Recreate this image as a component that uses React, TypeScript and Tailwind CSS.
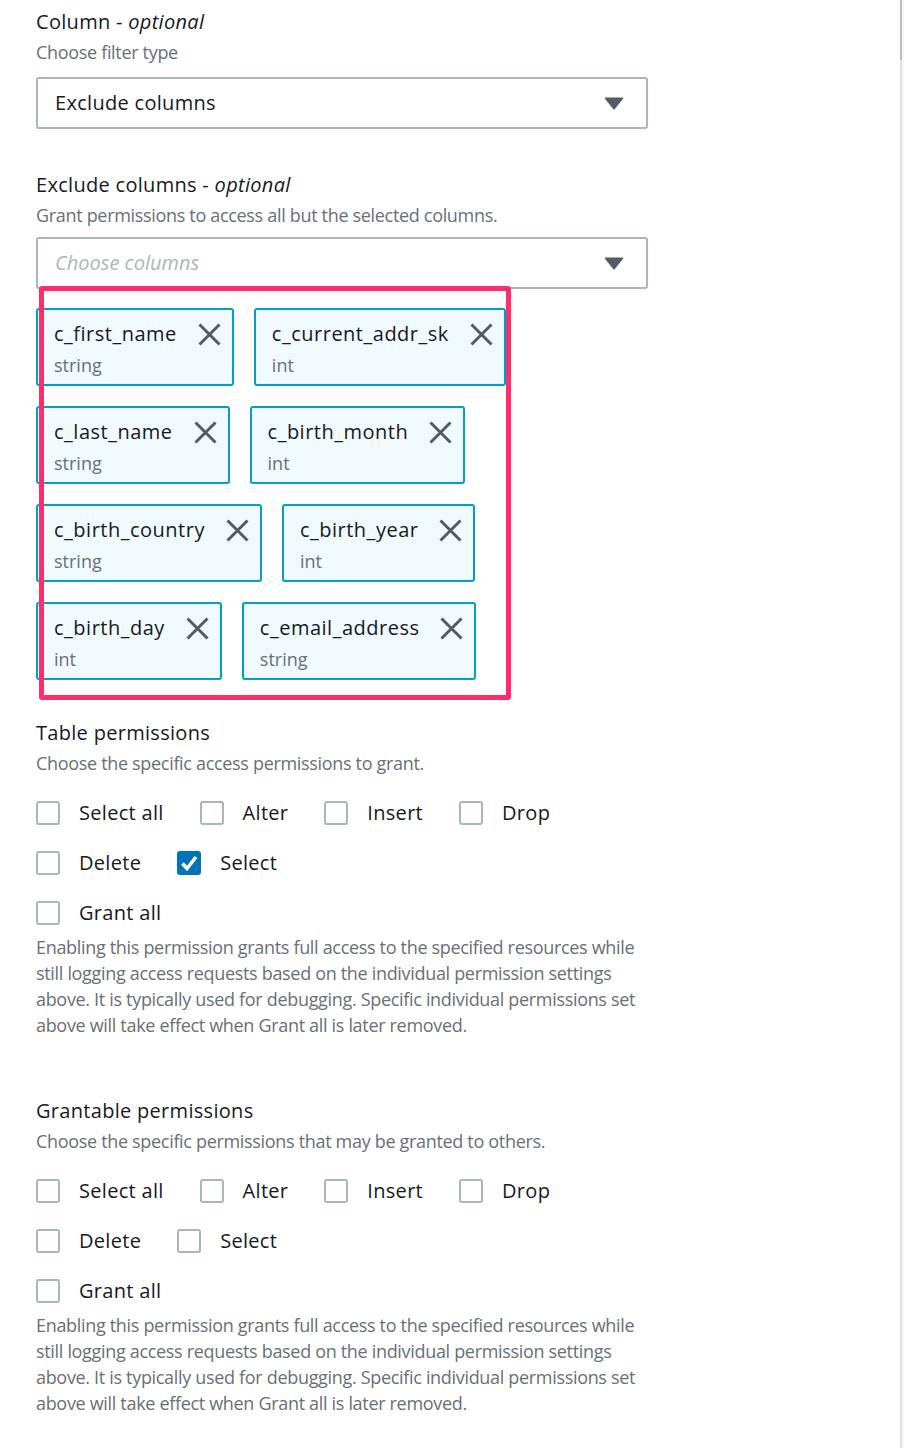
import { Fragment } from "react";

interface Column {
  name: string;
  type: string;
}

const labelText = "text-[20px] leading-[28px] tracking-[0.3px] text-[#16191f]";
const descText = "text-[18px] leading-[26px] tracking-[-0.32px] text-[#687078]";

const columnRows: Column[][] = [
  [
    { name: "c_first_name", type: "string" },
    { name: "c_current_addr_sk", type: "int" },
  ],
  [
    { name: "c_last_name", type: "string" },
    { name: "c_birth_month", type: "int" },
  ],
  [
    { name: "c_birth_country", type: "string" },
    { name: "c_birth_year", type: "int" },
  ],
  [
    { name: "c_birth_day", type: "int" },
    { name: "c_email_address", type: "string" },
  ],
];

const grantAllHelp =
  "Enabling this permission grants full access to the specified resources while still logging access requests based on the individual permission settings above. It is typically used for debugging. Specific individual permissions set above will take effect when Grant all is later removed.";

const CaretDown = () => (
  <svg width="20" height="13" viewBox="0 0 20 13">
    <path
      d="M1.5 1.2 H18.5 L10 11.8 Z"
      fill="#545b64"
      stroke="#545b64"
      strokeWidth="1.5"
      strokeLinejoin="round"
    />
  </svg>
);

const CloseIcon = () => (
  <svg width="23" height="23" viewBox="0 0 23 23" fill="none">
    <path
      d="M1.5 1.5 L21.5 21.5 M21.5 1.5 L1.5 21.5"
      stroke="#545b64"
      strokeWidth="3"
    />
  </svg>
);

const Select = ({ value, placeholder }: { value?: string; placeholder?: string }) => (
  <div className="h-[52px] flex items-center justify-between rounded-[3px] border-2 border-[#aab7b8] bg-white pl-[17px] pr-[22px]">
    {value ? (
      <span className={labelText}>{value}</span>
    ) : (
      <span className="text-[20px] leading-[28px] italic text-[#aab7b8]">
        {placeholder}
      </span>
    )}
    <CaretDown />
  </div>
);

const Token = ({ column }: { column: Column }) => (
  <div className="h-[78px] rounded-[3px] border-2 border-[#00a1c9] bg-[#f1faff] pl-4 pr-[11px] pt-3">
    <div className="flex items-center">
      <span className="text-[20px] leading-[24px] tracking-[0.5px] text-[#16191f]">
        {column.name}
      </span>
      <span className="ml-[21px] flex">
        <CloseIcon />
      </span>
    </div>
    <div className="mt-2 text-[18px] leading-[22px] text-[#687078]">
      {column.type}
    </div>
  </div>
);

const Checkbox = ({ label, checked }: { label: string; checked?: boolean }) => (
  <label className="flex items-center gap-[19px]">
    {checked ? (
      <span className="w-6 h-6 rounded-[3px] bg-[#0073bb] flex items-center justify-center">
        <svg width="24" height="24" viewBox="0 0 24 24" fill="none">
          <path
            d="M5.5 12.5 L10 17.5 L19 6"
            stroke="white"
            strokeWidth="3.5"
            strokeLinejoin="miter"
          />
        </svg>
      </span>
    ) : (
      <span className="w-6 h-6 rounded-[3px] border-2 border-[#aab7b8] bg-white" />
    )}
    <span className={labelText}>{label}</span>
  </label>
);

const PermissionSection = ({
  title,
  description,
  selectChecked,
}: {
  title: string;
  description: string;
  selectChecked?: boolean;
}) => (
  <div>
    <div className={labelText}>{title}</div>
    <div className={`mt-[3px] ${descText}`}>{description}</div>
    <div className="mt-[23px] flex flex-col gap-[22px]">
      <div className="h-[28px] flex items-center gap-x-[36px]">
        <Checkbox label="Select all" />
        <Checkbox label="Alter" />
        <Checkbox label="Insert" />
        <Checkbox label="Drop" />
      </div>
      <div className="h-[28px] flex items-center gap-x-[36px]">
        <Checkbox label="Delete" />
        <Checkbox label="Select" checked={selectChecked} />
      </div>
      <div className="h-[28px] flex items-center">
        <Checkbox label="Grant all" />
      </div>
    </div>
    <p className={`mt-[7px] ${descText}`}>{grantAllHelp}</p>
  </div>
);

export default function App() {
  return (
    <div className="h-[1448px] flex bg-white font-['Open_Sans',sans-serif] overflow-hidden">
      <div className="flex-1 pl-[36px] pt-[8px]">
        <div className="w-[614px]">
          {/* column filter */}
          <div className={labelText}>
            Column - <span className="italic">optional</span>
          </div>
          <div className={`mt-[3px] ${descText}`}>Choose filter type</div>
          <div className="mt-[12px] w-[612px]">
            <Select value="Exclude columns" />
          </div>

          <div className={`mt-[42px] ${labelText}`}>
            Exclude columns - <span className="italic">optional</span>
          </div>
          <div className={`mt-[3px] ${descText}`}>
            Grant permissions to access all but the selected columns.
          </div>
          <div className="mt-[9px] w-[612px]">
            <Select placeholder="Choose columns" />
          </div>

          {/* selected tokens */}
          <div className="relative mt-[19px] flex flex-col gap-5">
            {columnRows.map((row, i) => (
              <div key={i} className="flex gap-5">
                {row.map((col) => (
                  <Fragment key={col.name}>
                    <Token column={col} />
                  </Fragment>
                ))}
              </div>
            ))}
            <div className="absolute left-[3px] -top-[22px] w-[472px] h-[414px] rounded-[3px] border-[5px] border-[#ff2d6d] pointer-events-none" />
          </div>

          <div className="mt-[39px]">
            <PermissionSection
              title="Table permissions"
              description="Choose the specific access permissions to grant."
              selectChecked
            />
          </div>

          <div className="mt-[59px]">
            <PermissionSection
              title="Grantable permissions"
              description="Choose the specific permissions that may be granted to others."
            />
          </div>
        </div>
      </div>
      {/* panel edge */}
      <div className="w-[2px] bg-[#dde1e2]">
        <div className="h-[60px] bg-[#b6bec1]" />
      </div>
      <div className="w-[2px] bg-[#f6f7f7]" />
    </div>
  );
}
